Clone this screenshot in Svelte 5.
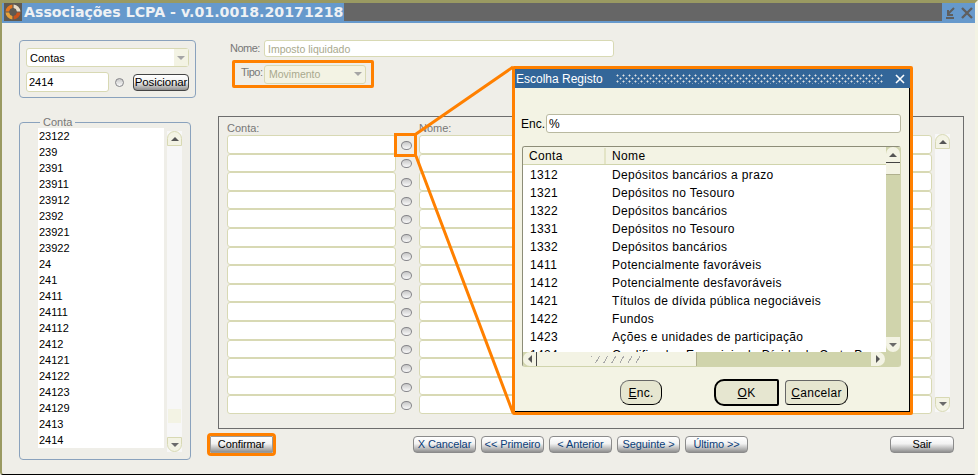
<script>
	const contas = ['23122', '239', '2391', '23911', '23912', '2392', '23921', '23922', '24', '241', '2411', '24111', '24112', '2412', '24121', '24122', '24123', '24129', '2413', '2414'];
	const rows = Array(15).fill(0);
	const registos = [
		['1312', 'Depósitos bancários a prazo'],
		['1321', 'Depósitos no Tesouro'],
		['1322', 'Depósitos bancários'],
		['1331', 'Depósitos no Tesouro'],
		['1332', 'Depósitos bancários'],
		['1411', 'Potencialmente favoráveis'],
		['1412', 'Potencialmente desfavoráveis'],
		['1421', 'Títulos de dívida pública negociáveis'],
		['1422', 'Fundos'],
		['1423', 'Ações e unidades de participação'],
		['1424', 'Qualificados Especiais de Dívida de Curto Prazo']
	];
	const nav = ['X Cancelar', '<< Primeiro', '< Anterior', 'Seguinte >', 'Último >>'];
</script>

<div class="window">
	<header class="titlebar">
		<svg class="logo" viewBox="0 0 18 18" width="18" height="18">
			<rect width="18" height="18" fill="#5f5a52" />
			<path d="M8.4 1.5A7.5 7.5 0 0 0 1.5 8.4h3.6a3.9 3.9 0 0 1 3.3-3.3z" fill="#e8781e" />
			<path d="M9.6 1.5a7.5 7.5 0 0 1 6.9 6.9h-3.6a3.9 3.9 0 0 0-3.3-3.3z" fill="#e6dcc8" />
			<path d="M1.5 9.6a7.5 7.5 0 0 0 6.9 6.9v-3.6a3.9 3.9 0 0 1-3.3-3.3z" fill="#e8a23a" />
			<path d="M16.5 9.6a7.5 7.5 0 0 1-6.9 6.9v-3.6a3.9 3.9 0 0 0 3.3-3.3z" fill="#c9531b" />
		</svg>
		<h1>Associações LCPA - v.01.0018.20171218</h1>
		<div class="redacted"></div>
		<svg class="winbtn" viewBox="0 0 32 14" width="32" height="14">
			<path d="M3 12h8M11 2 5 8M5 4v5h5" fill="none" stroke="#5f5f5f" stroke-width="2" />
			<path d="M19 2l10 10M29 2 19 12" fill="none" stroke="#5f5f5f" stroke-width="2.4" />
		</svg>
	</header>

	<main class="content">
		<aside class="left">
			<section class="search">
				<div class="select">
					<span>Contas</span>
					<i class="drop"><b class="tri down pale"></b></i>
				</div>
				<div class="search-row">
					<div class="input small">2414</div>
					<span class="radio round"></span>
					<button class="btn pos">Posicionar</button>
				</div>
			</section>

			<fieldset class="accounts">
				<legend>Conta</legend>
				<ul>
					{#each contas as c}
						<li>{c}</li>
					{/each}
				</ul>
				<div class="vscroll">
					<span class="arrow up"><b class="tri upw"></b></span>
					<span class="mark"></span>
					<span class="arrow dn"><b class="tri down"></b></span>
				</div>
			</fieldset>
		</aside>

		<div class="right">
			<div class="meta">
				<div class="field">
					<label for="nome">Nome:</label>
					<div id="nome" class="input name">Imposto liquidado</div>
				</div>
				<div class="field tipo">
					<span class="lbl">Tipo:</span>
					<div class="select off"><span>Movimento</span><b class="tri down pale"></b></div>
				</div>
			</div>

			<section class="grid">
				<div class="heads"><span class="h1">Conta:</span><span>Nome:</span></div>
				<div class="grid-body">
					<div class="grid-rows">
						{#each rows as _}
							<div class="grid-row">
								<div class="cell a"></div>
								<span class="radio flat"></span>
								<div class="cell b"></div>
							</div>
						{/each}
					</div>
					<div class="vscroll tall">
						<span class="arrow up"><b class="tri upw"></b></span>
						<span class="arrow dn"><b class="tri down"></b></span>
					</div>
				</div>
			</section>

			<div class="actions">
				<button class="btn confirm">Confirmar</button>
				<div class="nav">
					{#each nav as n}
						<button class="btn blue">{n}</button>
					{/each}
				</div>
				<button class="btn sair">Sair</button>
			</div>
		</div>
	</main>

	<!-- callout from the list button to the popup -->
	<svg class="callout" width="978" height="475">
		<path d="M416 134 513 67M416 156 513 413" stroke="#ff8000" stroke-width="3" fill="none" />
		<rect x="395.5" y="134.5" width="20" height="21" fill="none" stroke="#ff8000" stroke-width="3" />
	</svg>

	<div class="popup">
		<div class="pop-title">
			<span>Escolha Registo</span>
			<i class="dots"></i>
			<svg viewBox="0 0 10 10" width="10" height="10"><path d="M1 1l8 8M9 1 1 9" stroke="#fff" stroke-width="1.6" /></svg>
		</div>
		<div class="pop-body">
			<div class="enc">
				<span>Enc.</span>
				<div class="input">%</div>
			</div>
			<div class="table">
				<div class="thead"><span class="c1">Conta</span><span class="c2">Nome</span></div>
				<div class="tbody">
					{#each registos as r}
						<div class="tr"><span class="c1">{r[0]}</span><span class="c2">{r[1]}</span></div>
					{/each}
				</div>
				<div class="t-v">
					<span class="sb-btn"><b class="tri upw"></b></span>
					<span class="sb-thumb"></span>
					<span class="sb-fill"></span>
					<span class="sb-btn end"><b class="tri down"></b></span>
				</div>
				<div class="t-h">
					<span class="sb-h"><b class="tri left-t"></b></span>
					<span class="sb-hthumb"><i></i></span>
					<span class="sb-hfill"></span>
					<span class="sb-h end"><b class="tri right-t"></b></span>
				</div>
			</div>
			<div class="pop-actions">
				<button class="pbtn enc-b"><u>E</u>nc.</button>
				<button class="pbtn ok"><u>O</u>K</button>
				<button class="pbtn cancel"><u>C</u>ancelar</button>
			</div>
		</div>
	</div>
</div>

<style>
	:global(body) {
		margin: 0;
		background: #efeee8;
	}

	.window {
		position: relative;
		box-sizing: border-box;
		width: 978px;
		height: 475px;
		overflow: hidden;
		border-top: 3px solid #9a9a62;
		border-left: 2px solid #9a9a62;
		border-bottom: 1px solid #000;
		border-right: 3px solid #f3f3e4;
		border-bottom-right-radius: 5px;
		border-bottom-left-radius: 3px;
		background: #efeee8;
		font-family: 'Liberation Sans', Arial, sans-serif;
		font-size: 12px;
		color: #000;
	}

	/* Title bar */
	.titlebar {
		display: flex;
		align-items: flex-start;
		height: 20px;
		background: #6699cc;
	}

	.logo {
		flex: none;
		margin: 0 0 0 2px;
		display: block;
	}

	h1 {
		flex: none;
		width: 320px;
		margin: 0 0 0 2px;
		font-family: 'DejaVu Sans', Verdana, sans-serif;
		font-size: 14.2px;
		line-height: 19px;
		font-weight: bold;
		white-space: nowrap;
		color: #eef1f4;
	}

	.redacted {
		flex: none;
		width: 598px;
		height: 18px;
		background: #666;
	}

	.winbtn {
		flex: none;
		margin: 3px 0 0 1px;
	}

	/* Main layout */
	.content {
		display: flex;
		padding-top: 17px;
	}

	.left {
		flex: none;
		width: 216px;
		padding-left: 17px;
		box-sizing: border-box;
	}

	.search {
		box-sizing: border-box;
		width: 177px;
		height: 58px;
		padding: 7px 6px 0;
		border: 1px solid #8aa2bd;
		border-radius: 4px;
	}

	.select {
		display: flex;
		align-items: center;
		justify-content: space-between;
		box-sizing: border-box;
		height: 19px;
		padding-left: 3px;
		border: 1px solid #d8d9b4;
		border-radius: 3px;
		background: #fff;
		font-size: 11px;
	}

	.drop {
		display: flex;
		align-items: center;
		justify-content: center;
		width: 14px;
		height: 17px;
		background: #f3f3e4;
	}

	.search-row {
		display: flex;
		align-items: center;
		margin-top: 5px;
	}

	.input {
		box-sizing: border-box;
		border: 1px solid #d8d9b4;
		border-radius: 3px;
		background: #fff;
	}

	.small {
		width: 86px;
		height: 20px;
		padding-left: 2px;
		line-height: 19px;
		font-size: 11px;
	}

	.radio {
		flex: none;
		display: block;
		box-sizing: border-box;
		border: 1px solid #858589;
		background: linear-gradient(#c8c8c8, #fafafa);
		border-radius: 50%;
	}

	.round {
		width: 9px;
		height: 9px;
		margin: 0 9px 0 6px;
	}

	.flat {
		width: 11px;
		height: 9px;
		margin: 2px 7px 0 5px;
	}

	.btn {
		display: block;
		box-sizing: border-box;
		padding: 0;
		border: 1px solid #8b8b8b;
		border-radius: 4px;
		background: linear-gradient(#fff 0%, #f2f2f2 45%, #909090 100%);
		font-family: inherit;
		font-size: 11px;
		line-height: 15px;
		letter-spacing: -0.1px;
		text-align: center;
		color: #000;
	}

	.pos {
		width: 58px;
		height: 17px;
		border-color: #444;
		font-size: 11.5px;
	}

	.accounts {
		position: relative;
		box-sizing: border-box;
		width: 172px;
		height: 342px;
		margin: 20px 0 0;
		padding: 0;
		border: 1px solid #8aa2bd;
		border-radius: 4px;
	}

	legend {
		margin-left: 20px;
		padding: 0 3px;
		font-size: 11px;
		line-height: 9px;
		color: #777;
	}

	ul {
		box-sizing: border-box;
		width: 126px;
		height: 320px;
		margin: 1px 0 0 18px;
		padding: 0 0 0 1px;
		list-style: none;
		background: #fff;
		font-size: 11px;
	}

	li {
		height: 16px;
		line-height: 16px;
	}

	.vscroll {
		position: absolute;
		top: 4px;
		left: 147px;
		bottom: 7px;
		display: flex;
		flex-direction: column;
		justify-content: space-between;
		width: 15px;
		background: #f7f7f7;
	}

	.arrow {
		display: flex;
		align-items: center;
		justify-content: center;
		box-sizing: border-box;
		height: 15px;
		border: 1px solid #d8d9b4;
		background: #f3f3e4;
	}

	.arrow.up {
		border-radius: 8px 8px 0 0;
	}

	.arrow.dn {
		border-radius: 0 0 8px 8px;
	}

	.mark {
		position: absolute;
		left: 1px;
		right: 1px;
		bottom: 29px;
		height: 14px;
		background: #f3f3e4;
	}

	.tri {
		display: block;
		width: 0;
		height: 0;
		border-style: solid;
		border-color: transparent;
	}

	.down {
		border-width: 4px 4px 0;
		border-top-color: #6a6a6a;
	}

	.down.pale {
		border-top-color: #a5a5a5;
	}

	.upw {
		border-width: 0 4px 4px;
		border-bottom-color: #555;
	}

	.left-t {
		border-width: 4px 4px 4px 0;
		border-right-color: #555;
	}

	.right-t {
		border-width: 4px 0 4px 4px;
		border-left-color: #555;
	}

	/* Right side */
	.right {
		flex: none;
		width: 757px;
	}

	.meta {
		height: 76px;
		padding-left: 12px;
		color: #777;
	}

	.field {
		display: flex;
		align-items: center;
	}

	.field label {
		width: 34px;
		margin-top: -1px;
		font-size: 11px;
		letter-spacing: -0.5px;
	}

	.name {
		width: 350px;
		height: 17px;
		padding-left: 3px;
		line-height: 16px;
		font-size: 10.5px;
		color: #a9a98d;
	}

	.tipo {
		box-sizing: border-box;
		width: 142px;
		height: 28px;
		margin: 3px 0 0 2px;
		padding-left: 6px;
		border: 3px solid #ff8000;
		border-radius: 2px;
	}

	.lbl {
		width: 23px;
		margin-top: -4px;
		font-size: 11px;
		letter-spacing: -0.5px;
	}

	.off {
		width: 102px;
		padding: 0 3px 0 4px;
		border-radius: 3px;
		background: #f3f3e4;
		font-size: 10.5px;
		color: #a9a98d;
	}

	.grid {
		box-sizing: border-box;
		width: 746px;
		height: 313px;
		padding: 4px 0 0 8px;
		border: 1px solid #6d6d6d;
	}

	.heads {
		display: flex;
		height: 14px;
		font-size: 11px;
		line-height: 14px;
		color: #777;
	}

	.h1 {
		width: 192px;
	}

	.grid-body {
		position: relative;
		display: flex;
	}

	.grid-rows {
		display: flex;
		flex-direction: column;
	}

	.grid-row {
		display: flex;
		align-items: center;
		height: 18.6px;
	}

	.cell {
		box-sizing: border-box;
		height: 100%;
		border: 1px solid #d8d9b4;
		border-radius: 3px;
		background: #fff;
	}

	.a {
		width: 169px;
	}

	.b {
		width: 513px;
	}

	.tall {
		top: -1px;
		left: 708px;
		bottom: 2px;
	}

	.actions {
		display: flex;
		align-items: center;
		height: 17px;
		margin-top: 7px;
	}

	.confirm {
		width: 63px;
		height: 17px;
		margin-left: -8px;
		outline: 3px solid #ff8000;
		border-color: #9a9a9a;
		border-radius: 1px;
	}

	.nav {
		display: flex;
		gap: 5px;
		margin-left: 140px;
	}

	.blue {
		width: 63px;
		height: 17px;
		color: #0b3d78;
	}

	.sair {
		width: 64px;
		height: 17px;
		margin-left: 142px;
	}

	/* Popup */
	.callout {
		position: absolute;
		top: -3px;
		left: -2px;
		pointer-events: none;
	}

	.popup {
		position: absolute;
		top: 63px;
		left: 510px;
		box-sizing: border-box;
		width: 401px;
		height: 349px;
		border: 3px solid #ff8000;
		border-radius: 2px;
		background: #f3f3e4;
		box-shadow: inset -1px -1px 0 #000;
	}

	.pop-title {
		display: flex;
		align-items: center;
		height: 19px;
		padding-left: 1px;
		background: #336699;
		font-size: 12px;
		color: #fff;
	}

	.dots {
		flex: none;
		width: 267px;
		height: 10px;
		margin: 0 12px 0 13px;
		background-image:
			radial-gradient(circle at 1.5px 1.5px, #e4e4e4 0.9px, transparent 1.1px),
			radial-gradient(circle at 4.5px 4.5px, #e4e4e4 0.9px, transparent 1.1px);
		background-size: 6px 6px;
	}

	.pop-title svg {
		display: block;
	}

	.pop-body {
		padding: 26px 0 0 6px;
	}

	.enc {
		display: flex;
		align-items: center;
		font-size: 12px;
	}

	.enc span {
		width: 25px;
	}

	.enc .input {
		box-sizing: border-box;
		width: 355px;
		height: 19px;
		padding-left: 2px;
		line-height: 18px;
		border-color: #b9b9a0;
	}

	.table {
		position: relative;
		box-sizing: border-box;
		width: 379px;
		height: 221px;
		margin: 13px 0 0 1px;
		overflow: hidden;
		border: 1px solid #8d8d78;
		border-right-color: #d0d4ac;
		border-bottom-color: #d0d4ac;
		border-radius: 3px;
		background: #fff;
	}

	.thead {
		display: flex;
		box-sizing: border-box;
		height: 18px;
		padding-top: 1px;
		line-height: 17px;
		border-bottom: 1px solid #d0d4ac;
		background: #f3f3e4;
		letter-spacing: 0.35px;
	}

	.tbody {
		padding-top: 1px;
	}

	.c1 {
		width: 83px;
		padding-left: 7px;
		box-sizing: border-box;
	}

	.thead .c1 {
		padding-left: 6px;
		border-right: 2px solid #e3e4c6;
	}

	.thead .c2 {
		padding-left: 6px;
	}

	.tr {
		display: flex;
		height: 18px;
		line-height: 18px;
		letter-spacing: 0.35px;
		white-space: nowrap;
	}

	.tr .c2 {
		padding-left: 6px;
	}

	.t-v {
		position: absolute;
		top: 0;
		right: 0;
		bottom: 0;
		display: flex;
		flex-direction: column;
		width: 14px;
		background: #d0d4ac;
	}

	.sb-btn {
		display: flex;
		align-items: center;
		justify-content: center;
		height: 15px;
		border-bottom: 1px solid #444;
		border-radius: 7px 7px 0 0;
		background: #f3f3e4;
	}

	.sb-btn.end {
		height: 15px;
		margin-bottom: 14px;
		border-bottom: none;
		border-radius: 0 0 7px 7px;
	}

	.sb-thumb {
		height: 11px;
		border-bottom: 1px solid #b0b08e;
		background: #f3f3e4;
	}

	.sb-fill {
		flex: 1;
	}

	.t-h {
		position: absolute;
		left: 0;
		right: 0;
		bottom: 0;
		display: flex;
		align-items: stretch;
		height: 14px;
		background: #d0d4ac;
	}

	.sb-h {
		display: flex;
		align-items: center;
		justify-content: center;
		box-sizing: border-box;
		width: 14px;
		border-right: 1px solid #444;
		border-radius: 7px 0 0 7px;
		background: #f3f3e4;
	}

	.sb-h.end {
		width: 14px;
		margin-right: 15px;
		border-right: none;
		border-radius: 0 7px 7px 0;
	}

	.sb-hthumb {
		display: flex;
		align-items: center;
		justify-content: center;
		width: 159px;
		border-right: 1px solid #b0b08e;
		background: #f3f3e4;
	}

	.sb-hthumb i {
		display: block;
		width: 52px;
		height: 7px;
		background-image: repeating-linear-gradient(120deg, #a8a8a8 0 1px, transparent 1px 7px);
	}

	.sb-hfill {
		flex: 1;
	}

	.pop-actions {
		display: flex;
		align-items: center;
		margin-top: 12px;
		padding-left: 99px;
	}

	.pbtn {
		box-sizing: border-box;
		height: 25px;
		padding: 0;
		border: 1px solid #666;
		border-right-color: #000;
		border-bottom-color: #000;
		border-radius: 9px;
		background: #e6e6d0;
		font-family: inherit;
		font-size: 12px;
		letter-spacing: 0.3px;
		color: #000;
	}

	.enc-b {
		width: 42px;
	}

	.ok {
		width: 65px;
		height: 27px;
		margin-left: 52px;
		border: 2px solid #000;
		border-radius: 10px 2px 2px 10px;
	}

	.cancel {
		width: 63px;
		margin-left: 6px;
		border-radius: 4px 9px 9px 4px;
	}
</style>
